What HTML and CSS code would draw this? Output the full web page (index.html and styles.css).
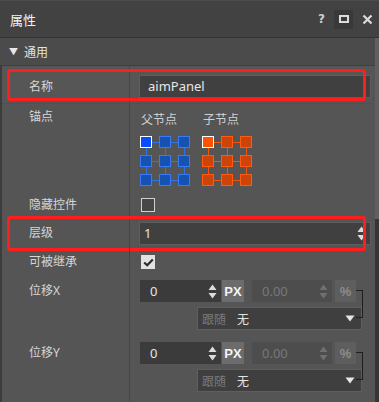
FILE: index.html
```html
<!DOCTYPE html>
<html lang="zh-CN">
<head>
    <meta charset="UTF-8">
    <title>属性</title>
    <link rel="stylesheet" href="styles.css">
</head>
<body>
<div class="panel">
    <div class="titlebar">
        <span class="title">属性</span>
        <div class="tools">
            <span class="tool-help">?</span>
            <span class="tool-max"><span class="max-box"></span></span>
            <span class="tool-close">
                <svg width="11" height="11" viewBox="0 0 11 11"><path d="M1.5 1.5 L9.5 9.5 M9.5 1.5 L1.5 9.5" stroke="#dcdcdc" stroke-width="2.2"/></svg>
            </span>
        </div>
    </div>

    <div class="body">
        <div class="content">
            <div class="section-head"><span class="caret">▼</span>通用</div>

            <!-- 名称 -->
            <div class="row row-name">
                <div class="label">名称</div>
                <div class="value">
                    <div class="textbox">aimPanel</div>
                </div>
                <div class="mark mark-name"></div>
            </div>

            <!-- 锚点 -->
            <div class="row row-anchor">
                <div class="label">锚点</div>
                <div class="value anchors">
                    <div class="anchor">
                        <div class="anchor-cap">父节点</div>
                        <svg class="grid-blue" width="51" height="51" viewBox="0 0 51 51">
                            <g stroke="#2f73e8" stroke-width="1">
                                <path d="M12 6.5H19M31 6.5H38M12 25.5H19M31 25.5H38M12 44.5H19M31 44.5H38"/>
                                <path d="M6.5 12V19M25.5 12V19M44.5 12V19M6.5 31V38M25.5 31V38M44.5 31V38"/>
                            </g>
                            <g fill="#1652b4" stroke="#3a7cf0">
                                <rect x="0.5" y="0.5" width="11" height="11" fill="#0a4cff" stroke="#ffffff"/>
                                <rect x="19.5" y="0.5" width="11" height="11"/>
                                <rect x="38.5" y="0.5" width="11" height="11"/>
                                <rect x="0.5" y="19.5" width="11" height="11"/>
                                <rect x="19.5" y="19.5" width="11" height="11"/>
                                <rect x="38.5" y="19.5" width="11" height="11"/>
                                <rect x="0.5" y="38.5" width="11" height="11"/>
                                <rect x="19.5" y="38.5" width="11" height="11"/>
                                <rect x="38.5" y="38.5" width="11" height="11"/>
                            </g>
                        </svg>
                    </div>
                    <div class="anchor">
                        <div class="anchor-cap">子节点</div>
                        <svg class="grid-orange" width="51" height="51" viewBox="0 0 51 51">
                            <g stroke="#f05510" stroke-width="1">
                                <path d="M12 6.5H19M31 6.5H38M12 25.5H19M31 25.5H38M12 44.5H19M31 44.5H38"/>
                                <path d="M6.5 12V19M25.5 12V19M44.5 12V19M6.5 31V38M25.5 31V38M44.5 31V38"/>
                            </g>
                            <g fill="#cc4408" stroke="#ff5a14">
                                <rect x="0.5" y="0.5" width="11" height="11" fill="#ff5200" stroke="#ffffff"/>
                                <rect x="19.5" y="0.5" width="11" height="11"/>
                                <rect x="38.5" y="0.5" width="11" height="11"/>
                                <rect x="0.5" y="19.5" width="11" height="11"/>
                                <rect x="19.5" y="19.5" width="11" height="11"/>
                                <rect x="38.5" y="19.5" width="11" height="11"/>
                                <rect x="0.5" y="38.5" width="11" height="11"/>
                                <rect x="19.5" y="38.5" width="11" height="11"/>
                                <rect x="38.5" y="38.5" width="11" height="11"/>
                            </g>
                        </svg>
                    </div>
                </div>
            </div>

            <!-- 隐藏控件 -->
            <div class="row row-hide">
                <div class="label">隐藏控件</div>
                <div class="value"><span class="checkbox"></span></div>
            </div>

            <!-- 层级 -->
            <div class="row row-layer">
                <div class="label">层级</div>
                <div class="value">
                    <div class="textbox spin-box">
                        <span>1</span>
                        <svg class="spin" width="9" height="15" viewBox="0 0 9 15"><path d="M4.5 0.5 L8.5 6 L0.5 6 Z M0.5 9 L8.5 9 L4.5 14.5 Z" fill="#dcdcdc"/></svg>
                    </div>
                </div>
                <div class="mark mark-layer"></div>
            </div>

            <!-- 可被继承 -->
            <div class="row row-inherit">
                <div class="label">可被继承</div>
                <div class="value">
                    <span class="checkbox checked">
                        <svg width="11" height="9" viewBox="0 0 11 9"><path d="M1.2 4.5 L4.2 7.3 L9.8 1.6" stroke="#2a2a2a" stroke-width="2.2" fill="none"/></svg>
                    </span>
                </div>
            </div>

            <!-- 位移X -->
            <div class="row row-pos">
                <div class="label">位移X</div>
                <div class="value pos">
                    <div class="pos-line">
                        <div class="num">
                            <span>0</span>
                            <svg width="9" height="15" viewBox="0 0 9 15"><path d="M4.5 0.5 L8.5 6 L0.5 6 Z M0.5 9 L8.5 9 L4.5 14.5 Z" fill="#dcdcdc"/></svg>
                        </div>
                        <div class="unit">PX</div>
                        <div class="num num-off">
                            <span>0.00</span>
                            <svg width="9" height="15" viewBox="0 0 9 15"><path d="M4.5 0.5 L8.5 6 L0.5 6 Z M0.5 9 L8.5 9 L4.5 14.5 Z" fill="#707070"/></svg>
                        </div>
                        <div class="unit unit-off">%</div>
                    </div>
                    <div class="follow">
                        <span class="follow-key">跟随</span>
                        <span class="follow-val">无</span>
                        <svg width="10" height="7" viewBox="0 0 10 7"><path d="M0.5 0.5 L9.5 0.5 L5 6.5 Z" fill="#e6e6e6"/></svg>
                    </div>
                    <div class="link"></div>
                </div>
            </div>

            <!-- 位移Y -->
            <div class="row row-pos">
                <div class="label">位移Y</div>
                <div class="value pos">
                    <div class="pos-line">
                        <div class="num">
                            <span>0</span>
                            <svg width="9" height="15" viewBox="0 0 9 15"><path d="M4.5 0.5 L8.5 6 L0.5 6 Z M0.5 9 L8.5 9 L4.5 14.5 Z" fill="#dcdcdc"/></svg>
                        </div>
                        <div class="unit">PX</div>
                        <div class="num num-off">
                            <span>0.00</span>
                            <svg width="9" height="15" viewBox="0 0 9 15"><path d="M4.5 0.5 L8.5 6 L0.5 6 Z M0.5 9 L8.5 9 L4.5 14.5 Z" fill="#707070"/></svg>
                        </div>
                        <div class="unit unit-off">%</div>
                    </div>
                    <div class="follow">
                        <span class="follow-key">跟随</span>
                        <span class="follow-val">无</span>
                        <svg width="10" height="7" viewBox="0 0 10 7"><path d="M0.5 0.5 L9.5 0.5 L5 6.5 Z" fill="#e6e6e6"/></svg>
                    </div>
                    <div class="link"></div>
                </div>
            </div>
        </div>

        <div class="scrollbar"><div class="thumb"></div></div>
    </div>
</div>
</body>
</html>
```

FILE: styles.css
```css
* {
  box-sizing: border-box;
}

html,
body {
  margin: 0;
  padding: 0;
  width: 379px;
  height: 402px;
  overflow: hidden;
  background: #555555;
}

body {
  font-family: "Noto Sans", "Noto Sans CJK SC", sans-serif;
  font-size: 12px;
  color: #d6d6d6;
}

.panel {
  width: 379px;
  height: 402px;
  display: flex;
  flex-direction: column;
}

/* title bar */
.titlebar {
  height: 38px;
  flex: none;
  display: flex;
  align-items: center;
  justify-content: space-between;
  background: #424242;
  border-top: 1px solid #4c4c4c;
  border-bottom: 1px solid #333333;
  padding: 0 6px 0 10px;
}

.title {
  font-size: 13px;
  color: #f2f2f2;
}

.tools {
  display: flex;
  align-items: center;
}

.tool-help {
  font-family: "DejaVu Sans", sans-serif;
  font-weight: bold;
  font-size: 12px;
  color: #cfcfcf;
  margin-right: 9px;
}

.tool-max {
  width: 19px;
  height: 19px;
  background: #393939;
  display: flex;
  align-items: center;
  justify-content: center;
  margin-right: 9px;
}

.max-box {
  width: 10px;
  height: 8px;
  border: 2px solid #dcdcdc;
  border-top-width: 2px;
}

.tool-close {
  display: flex;
  width: 11px;
  height: 11px;
}

/* body */
.body {
  flex: 1;
  display: flex;
  min-height: 0;
}

.content {
  flex: 1;
  border-left: 2px solid #3c3c3c;
  margin-left: 0;
}

.scrollbar {
  width: 4px;
  flex: none;
  background: #353535;
  margin-left: 2px;
}

.thumb {
  height: 181px;
  background: #606060;
}

.section-head {
  height: 28px;
  background: #4b4b4b;
  border-bottom: 1px solid #3e3e3e;
  display: flex;
  align-items: center;
  padding-left: 9px;
  font-size: 12px;
  color: #e2e2e2;
  margin-left: -2px;
  margin-right: -6px;
}

.caret {
  font-size: 9px;
  margin-right: 6px;
  color: #e8e8e8;
}

/* property rows */
.row {
  display: grid;
  grid-template-columns: 128px 1fr;
  position: relative;
}

.label {
  border-right: 1px solid #464646;
  padding-left: 27px;
  line-height: 22px;
  white-space: nowrap;
}

.value {
  padding: 3px 2px 0 10px;
}

.row-name {
  height: 38px;
  background: #565656;
  border-bottom: 1px solid #515151;
}

.row-name .label {
  padding-top: 10px;
}

.row-name .value {
  padding-top: 9px;
  padding-left: 9px;
}

.textbox {
  height: 23px;
  background: #404040;
  border: 1px solid #5e5e5e;
  color: #e6e6e6;
  font-size: 13px;
  line-height: 21px;
  padding-left: 8px;
}

.spin-box {
  display: flex;
  align-items: center;
  justify-content: space-between;
  padding: 0 4px 0 4px;
  background: #404040;
}

.row-anchor {
  height: 90px;
}

.row-anchor .label {
  padding-top: 2px;
}

.anchors {
  display: flex;
  gap: 11px;
  padding-top: 8px;
}

.anchor-cap {
  line-height: 16px;
  margin-bottom: 8px;
  padding-left: 1px;
  color: #d2d2d2;
}

.anchor svg {
  display: block;
}

.row-hide {
  height: 25px;
}

.row-hide .label {
  line-height: 22px;
}

.checkbox {
  display: flex;
  width: 14px;
  height: 14px;
  border: 1px solid #d0d0d0;
  background: #474747;
  margin-left: 1px;
  align-items: center;
  justify-content: center;
}

.checkbox.checked {
  background: #e2e2e2;
  border-color: #e2e2e2;
}

.row-hide .value {
  padding-top: 4px;
}

.row-layer {
  height: 29px;
}

.row-layer .label {
  line-height: 28px;
}

.row-layer .value {
  padding-top: 3px;
  padding-left: 9px;
}

.row-inherit {
  height: 29px;
}

.row-inherit .label {
  line-height: 28px;
}

.row-inherit .value {
  padding-top: 7px;
}

/* position rows */
.row-pos {
  height: 62px;
}

.row-pos .label {
  padding-top: 3px;
}

.pos {
  position: relative;
}

.pos-line {
  display: flex;
  height: 22px;
}

.num {
  width: 81px;
  background: #3b3b3b;
  display: flex;
  align-items: center;
  justify-content: space-between;
  padding: 0 4px 0 10px;
  color: #e6e6e6;
  font-size: 13px;
}

.num-off {
  width: 80px;
  margin-left: 8px;
  background: #4d4d4d;
  color: #787878;
}

.unit {
  width: 22px;
  margin-left: 1px;
  background: #6c6c6c;
  color: #f4f4f4;
  font-family: "Liberation Sans", sans-serif;
  font-weight: bold;
  font-size: 13px;
  display: flex;
  align-items: center;
  justify-content: center;
}

.unit-off {
  width: 21px;
  margin-left: 3px;
  background: #5e5e5e;
  color: #8c8c8c;
}

.follow {
  margin: 5px 0 0 57px;
  width: 165px;
  height: 23px;
  background: #3f3f3f;
  border: 1px solid #5e5e5e;
  display: flex;
  align-items: center;
  padding: 0 6px 0 4px;
}

.follow-key {
  color: #7a7a7a;
  margin-right: 11px;
}

.follow-val {
  color: #e2e2e2;
  flex: 1;
}

.link {
  position: absolute;
  left: 226px;
  top: 13px;
  width: 7px;
  height: 28px;
  border: 1px solid #1f1f1f;
  border-left: none;
}

/* red highlight marks */
.mark {
  position: absolute;
  left: 5px;
  width: 359px;
  border: 3px solid #ff1e1e;
  border-radius: 3px;
}

.mark-name {
  top: 3px;
  height: 32px;
}

.mark-layer {
  top: -3px;
  height: 35px;
}
```
